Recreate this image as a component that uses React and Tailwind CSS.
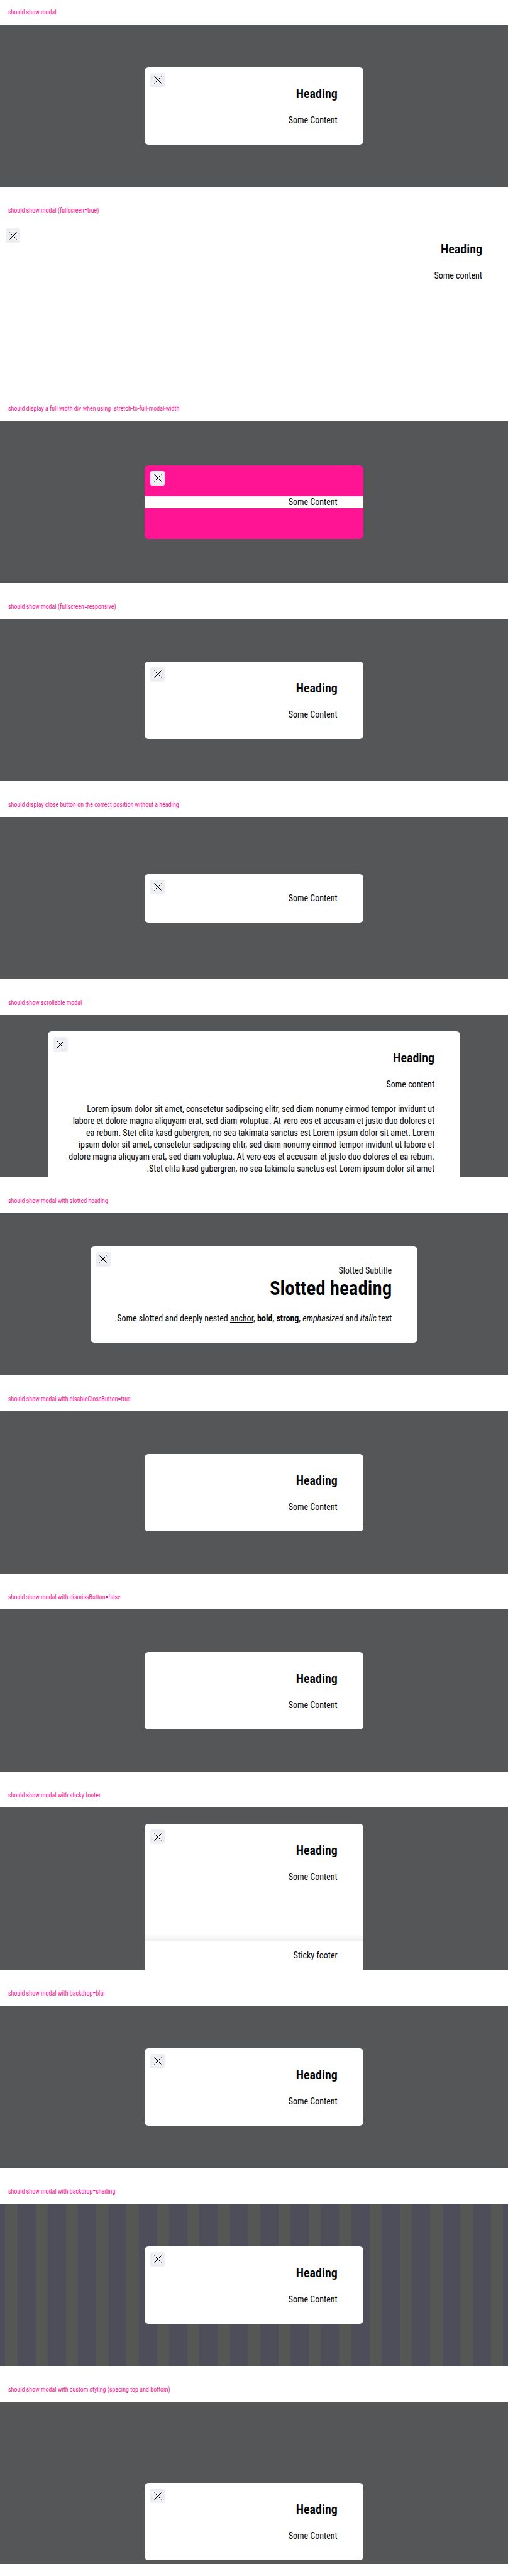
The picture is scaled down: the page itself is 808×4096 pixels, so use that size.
function CloseButton() {
  return (
    <button
      type="button"
      aria-label="Dismiss modal"
      className="absolute top-[9px] left-[9px] flex size-[23px] items-center justify-center rounded-[3px] bg-[#eeeff2]"
    >
      <svg viewBox="0 0 12 12" className="size-3" fill="none" stroke="#010205" strokeWidth="1" aria-hidden="true">
        <path d="M0.5 0.5 L11.5 11.5 M11.5 0.5 L0.5 11.5" />
      </svg>
    </button>
  );
}

function Case({ title, children, stage = "items-center", backdrop = "bg-[#555658]" }) {
  return (
    <section className="pb-[18px]">
      <h2 className="flex h-[39px] items-center px-[13px] text-[10px] leading-3 text-[#ff1493]">{title}</h2>
      <div dir="rtl" className={`flex h-[258px] justify-center overflow-hidden ${stage} ${backdrop}`}>
        {children}
      </div>
    </section>
  );
}

function Modal({ heading, children, close = true, width = "w-[43%]", shape = "rounded-md" }) {
  return (
    <div role="dialog" className={`relative flex flex-col gap-5 bg-white px-[41px] py-[29px] ${width} ${shape}`}>
      {close && <CloseButton />}
      {heading && <h3 className="text-[20px] leading-[26px] font-semibold">{heading}</h3>}
      {children}
    </div>
  );
}

export default function App() {
  return (
    <main className="bg-white font-['Roboto_Condensed','Roboto',sans-serif] text-[14px] leading-[19px] text-[#010205]">
      <Case title="should show modal">
        <Modal heading="Heading"><p>Some Content</p></Modal>
      </Case>

      <Case title="should show modal (fullscreen=true)" stage="items-stretch" backdrop="bg-white">
        <Modal heading="Heading" width="w-full" shape="rounded-none"><p>Some content</p></Modal>
      </Case>

      <Case title="should display a full width div when using .stretch-to-full-modal-width">
        <div role="dialog" className="relative w-[43%] overflow-hidden rounded-md bg-[#ff1493] py-[49px]">
          <CloseButton />
          <p className="bg-white px-[41px]">Some Content</p>
        </div>
      </Case>

      <Case title="should show modal (fullscreen=responsive)">
        <Modal heading="Heading"><p>Some Content</p></Modal>
      </Case>

      <Case title="should display close button on the correct position without a heading">
        <Modal><p>Some Content</p></Modal>
      </Case>

      <Case title="should show scrollable modal" stage="items-start pt-[26px]">
        <Modal heading="Heading" width="w-[81.2%]">
          <p>Some content</p>
          <p className="-ml-[10px]">
            Lorem ipsum dolor sit amet, consetetur sadipscing elitr, sed diam nonumy eirmod tempor invidunt ut labore
            et dolore magna aliquyam erat, sed diam voluptua. At vero eos et accusam et justo duo dolores et ea rebum.
            Stet clita kasd gubergren, no sea takimata sanctus est Lorem ipsum dolor sit amet. Lorem ipsum dolor sit
            amet, consetetur sadipscing elitr, sed diam nonumy eirmod tempor invidunt ut labore et dolore magna
            aliquyam erat, sed diam voluptua. At vero eos et accusam et justo duo dolores et ea rebum. Stet clita kasd
            gubergren, no sea takimata sanctus est Lorem ipsum dolor sit amet.
          </p>
        </Modal>
      </Case>

      <Case title="should show modal with slotted heading">
        <Modal width="w-[64.4%]">
          <div>
            <p>Slotted Subtitle</p>
            <h3 className="text-[31px] leading-[37px] font-semibold">Slotted heading</h3>
          </div>
          <p className="-ml-[10px]">
            Some slotted and deeply nested <a href="#" className="underline">anchor</a>, <b>bold</b>,{" "}
            <strong>strong</strong>, <em>emphasized</em> and <i>italic</i> text.
          </p>
        </Modal>
      </Case>

      <Case title="should show modal with disableCloseButton=true">
        <Modal heading="Heading" close={false}><p>Some Content</p></Modal>
      </Case>

      <Case title="should show modal with dismissButton=false">
        <Modal heading="Heading" close={false}><p>Some Content</p></Modal>
      </Case>

      <Case title="should show modal with sticky footer" stage="items-stretch pt-[26px]">
        <div role="dialog" className="relative flex w-[43%] flex-col rounded-t-md bg-white">
          <CloseButton />
          <div className="flex grow flex-col gap-5 px-[41px] pt-[29px]">
            <h3 className="text-[20px] leading-[26px] font-semibold">Heading</h3>
            <p>Some Content</p>
          </div>
          <div className="h-3 bg-linear-to-t from-black/7 to-transparent" />
          <footer className="px-[41px] py-[13px]">Sticky footer</footer>
        </div>
      </Case>

      <Case title="should show modal with backdrop=blur">
        <Modal heading="Heading"><p>Some Content</p></Modal>
      </Case>

      <Case
        title="should show modal with backdrop=shading"
        backdrop="bg-[repeating-linear-gradient(90deg,#555755_1.02%,#555755_3.43%,#4e4d5a_3.43%,#4e4d5a_6.995%)]"
      >
        <Modal heading="Heading"><p>Some Content</p></Modal>
      </Case>

      <Case title="should show modal with custom styling (spacing top and bottom)" stage="items-end pb-[6px]">
        <Modal heading="Heading"><p>Some Content</p></Modal>
      </Case>
    </main>
  );
}
